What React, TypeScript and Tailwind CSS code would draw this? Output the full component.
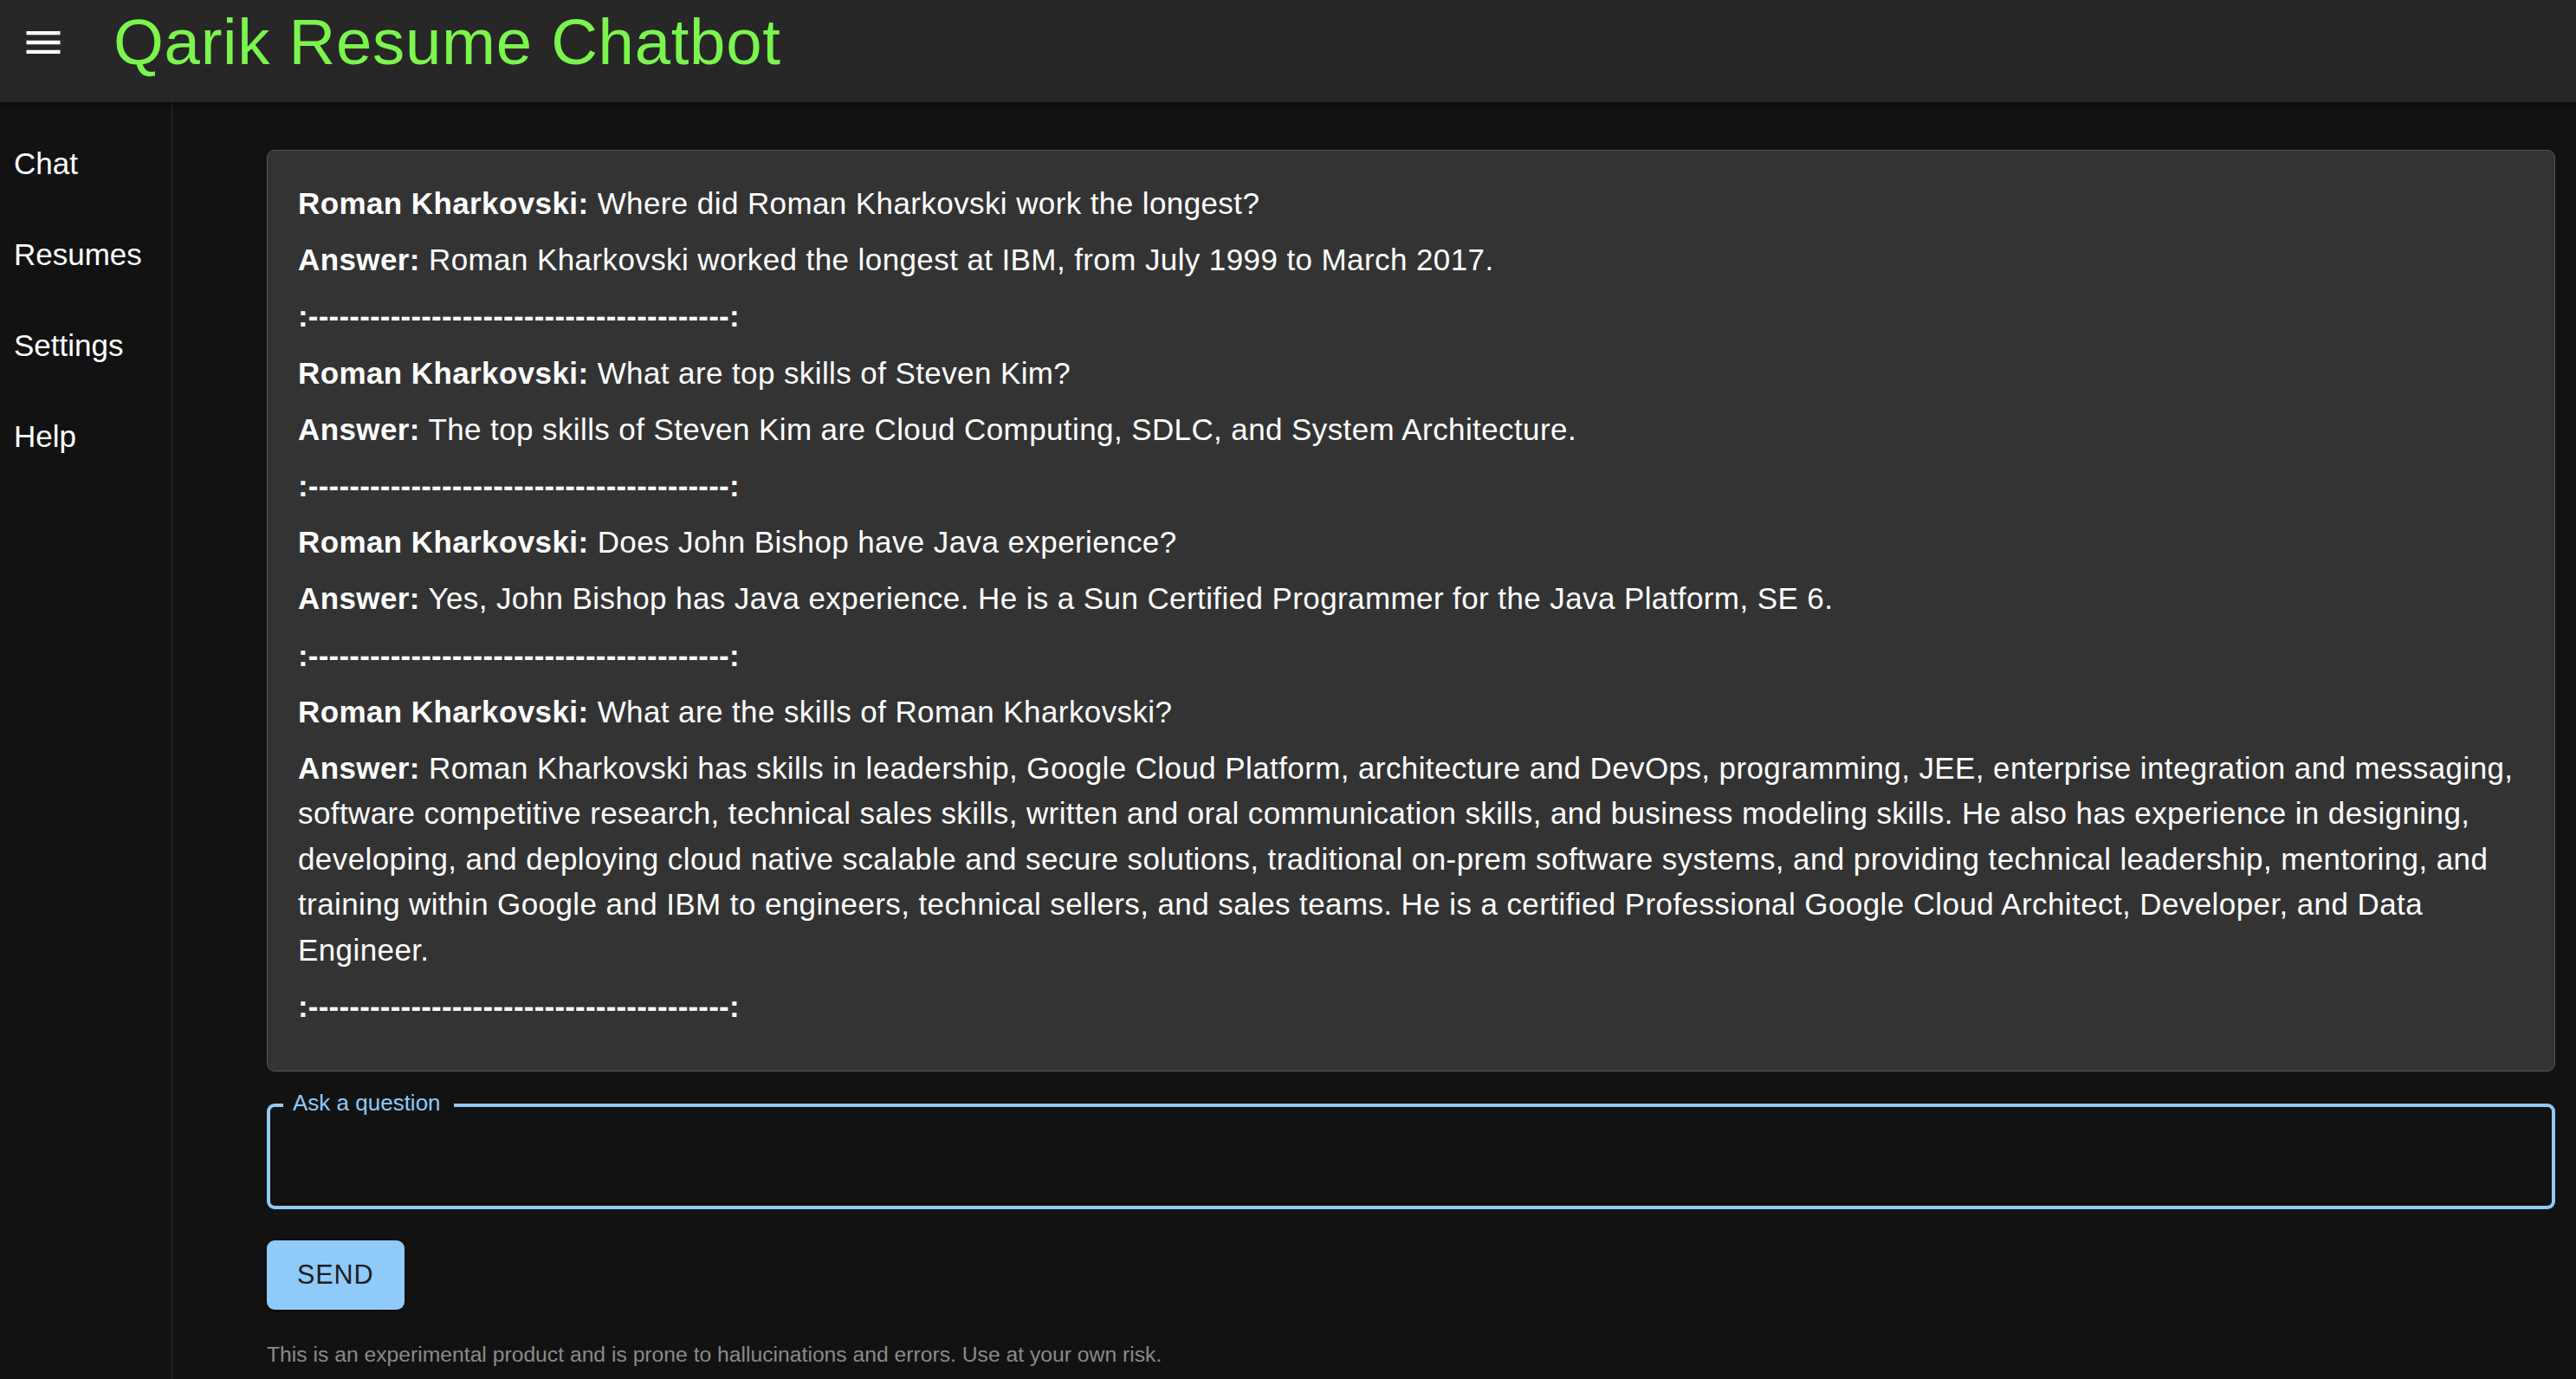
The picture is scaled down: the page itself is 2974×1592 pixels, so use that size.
import React from "react";

const font = { fontFamily: '"Liberation Sans", Arial, sans-serif' };

const qa = [
  {
    q: "Where did Roman Kharkovski work the longest?",
    a: "Roman Kharkovski worked the longest at IBM, from July 1999 to March 2017.",
  },
  {
    q: "What are top skills of Steven Kim?",
    a: "The top skills of Steven Kim are Cloud Computing, SDLC, and System Architecture.",
  },
  {
    q: "Does John Bishop have Java experience?",
    a: "Yes, John Bishop has Java experience. He is a Sun Certified Programmer for the Java Platform, SE 6.",
  },
  {
    q: "What are the skills of Roman Kharkovski?",
    a: "Roman Kharkovski has skills in leadership, Google Cloud Platform, architecture and DevOps, programming, JEE, enterprise integration and messaging, software competitive research, technical sales skills, written and oral communication skills, and business modeling skills. He also has experience in designing, developing, and deploying cloud native scalable and secure solutions, traditional on-prem software systems, and providing technical leadership, mentoring, and training within Google and IBM to engineers, technical sellers, and sales teams. He is a certified Professional Google Cloud Architect, Developer, and Data Engineer.",
  },
];

const sep = ":" + "-".repeat(41) + ":";

function MenuIcon() {
  return (
    <svg width="52" height="52" viewBox="0 0 24 24" fill="#ffffff">
      <path d="M3 18h18v-2H3zm0-5h18v-2H3zm0-7v2h18V6z" />
    </svg>
  );
}

export default function App() {
  return (
    <div className="min-h-screen w-full bg-[#121212] text-white flex flex-col" style={font}>
      {/* ── Header ───────────────────────────── */}
      <header className="h-[118px] bg-[#272727] shadow-[0_4px_8px_rgba(0,0,0,0.4)] relative z-10">
        <div className="h-[97px] flex items-center">
          <div className="ml-[24px] w-[52px] h-[52px]">
            <MenuIcon />
          </div>
          <h1 className="ml-[55px] text-[74.4px] leading-[92px] tracking-[0.7px] text-[#7bf54e] font-normal">
            Qarik Resume Chatbot
          </h1>
        </div>
      </header>

      <div className="flex flex-1">
        {/* ── Sidebar ───────────────────────────── */}
        <nav className="w-[199px] shrink-0 border-r border-[#2e2e2e] pt-[19px]">
          {["Chat", "Resumes", "Settings", "Help"].map((item) => (
            <div key={item} className="h-[105px] flex items-center pl-[16px] text-[35px] leading-[52.5px]">
              {item}
            </div>
          ))}
        </nav>

        {/* ── Main ───────────────────────────── */}
        <main className="flex-1 pl-[109px] pr-[24px] pt-[55px]">
          <div className="rounded-[9px] border border-[#565656] bg-[#333333] p-[35px] text-[35px] leading-[52.5px] tracking-[0.4px]">
            {qa.map((item) => (
              <div key={item.q}>
                <p className="mb-[12.7px]">
                  <span className="font-bold">Roman Kharkovski:</span> {item.q}
                </p>
                <p className="mb-[12.7px]">
                  <span className="font-bold">Answer:</span> {item.a}
                </p>
                <p className="mb-[12.7px] font-bold tracking-[0.2px]">{sep}</p>
              </div>
            ))}
          </div>

          <div className="relative mt-[37px] h-[122px] rounded-[9px] border-[4px] border-[#90caf9]">
            <span className="absolute left-[15px] top-[-18px] bg-[#121212] pl-[11px] pr-[15px] text-[26px] leading-[26px] text-[#90caf9]">
              Ask a question
            </span>
          </div>

          <button className="mt-[36px] h-[80px] px-[35px] rounded-[9px] bg-[#90caf9] text-[#1d1d1d] text-[30.6px] tracking-[0.9px] shadow-[0_3px_1px_-2px_rgba(0,0,0,0.2),0_2px_2px_0_rgba(0,0,0,0.14),0_1px_5px_0_rgba(0,0,0,0.12)]">
            SEND
          </button>

          <p className="mt-[30px] text-[24.7px] leading-[43px] text-[#8a8a8a]">
            This is an experimental product and is prone to hallucinations and errors. Use at your own risk.
          </p>
        </main>
      </div>
    </div>
  );
}
